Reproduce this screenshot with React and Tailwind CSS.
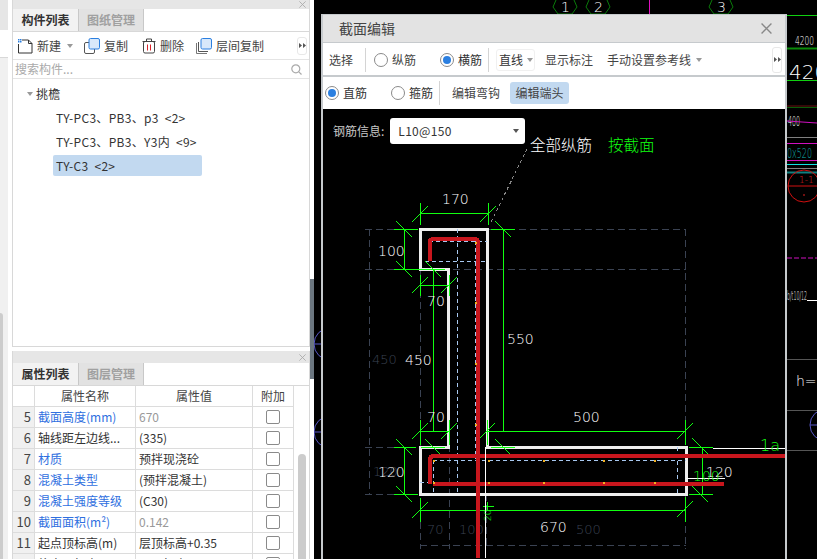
import React from 'react';

const FONT = '"Noto Sans CJK SC", "Noto Sans", sans-serif';
const CAD = '"DejaVu Sans", "Noto Sans CJK SC", sans-serif';

const rows = [
  { no: 5, name: '截面高度(mm)', value: '670', blue: true, gray: true },
  { no: 6, name: '轴线距左边线...', value: '(335)' },
  { no: 7, name: '材质', value: '预拌现浇砼', blue: true },
  { no: 8, name: '混凝土类型', value: '(预拌混凝土)', blue: true },
  { no: 9, name: '混凝土强度等级', value: '(C30)', blue: true },
  { no: 10, name: '截面面积(m²)', value: '0.142', blue: true, gray: true },
  { no: 11, name: '起点顶标高(m)', value: '层顶标高+0.35' },
  { no: 12, name: '终点顶标高(m)', value: '层顶标高' },
];

const Close = ({ size = 8, color = '#a8a8a8' }) => (
  <svg width={size} height={size} viewBox="0 0 10 10" stroke={color} strokeWidth="1.2">
    <path d="M0.5 0.5L9.5 9.5M9.5 0.5L0.5 9.5" />
  </svg>
);

const Caret = ({ color = '#999' }) => (
  <svg width="6" height="4" viewBox="0 0 6 4"><path d="M0 0H6L3 4Z" fill={color} /></svg>
);

const More = () => (
  <div className="flex h-full w-[10px] items-center justify-center rounded-[3px] border border-[#e8e8e8] bg-white">
    <svg width="7" height="5" viewBox="0 0 7 5" fill="#555"><path d="M0 0L3 2.5L0 5ZM4 0L7 2.5L4 5Z" /></svg>
  </div>
);

const Radio = ({ on }) => (
  <span className="flex h-[14px] w-[14px] items-center justify-center rounded-full border border-[#8a8a8a] bg-white">
    {on && <span className="h-[8px] w-[8px] rounded-full bg-[#2b7fe0]" />}
  </span>
);

const Sep = ({ className }) => <span className={`w-px bg-[#d4d4d4] ${className}`} />;

const NewIcon = () => (
  <svg width="16" height="16" viewBox="0 0 16 16" fill="none">
    <path d="M5 2H11.5L15 5.5V15H1.5V6" stroke="#333" />
    <path d="M11.5 2V5.5H15" stroke="#333" />
    <path d="M1 1h1.5v1.5H1zM3 3h1.5v1.5H3zM3 1h1.5v1.5H3zM1 3h1.5v1.5H1z" fill="#2b7fe0" />
  </svg>
);

const CopyIcon = () => (
  <svg width="16" height="16" viewBox="0 0 16 16" fill="none">
    <rect x="0.5" y="4.5" width="10" height="11" rx="1.5" stroke="#555" />
    <rect x="5" y="0.5" width="10.5" height="10.5" rx="1.5" fill="#d8e8fa" stroke="#2b7fe0" />
  </svg>
);

const TrashIcon = () => (
  <svg width="14" height="16" viewBox="0 0 14 16" fill="none" stroke="#444">
    <path d="M0.5 3.5H13.5M4.5 3.5V1H9.5V3.5" />
    <rect x="1.5" y="3.5" width="11" height="11.5" rx="1.5" />
    <path d="M5.5 6.5V12.5M8.5 6.5V12.5" stroke="#d8232a" />
  </svg>
);

const LayerCopyIcon = () => (
  <svg width="16" height="16" viewBox="0 0 16 16" fill="none">
    <path d="M0.5 5V15.5H11" stroke="#777" />
    <path d="M2.5 4V13.5H12" stroke="#555" />
    <rect x="5" y="0.5" width="10.5" height="10.5" rx="1.5" fill="#d8e8fa" stroke="#2b7fe0" />
  </svg>
);

const SearchIcon = () => (
  <svg width="11" height="11" viewBox="0 0 11 11" fill="none" stroke="#aaa" strokeWidth="1.2">
    <circle cx="4.8" cy="4.8" r="4" />
    <path d="M7.8 7.8L10.5 10.5" />
  </svg>
);

const Tab = ({ active, children }) => (
  <div className={`flex h-[22px] items-center justify-center border-r border-[#c8c8c8] font-bold ${active ? 'w-[66px] bg-[#f2f2f2] text-[#333]' : 'w-[65px] bg-[#e2e2e2] text-[#a0a0a0]'}`}>
    {children}
  </div>
);

const Tabs = ({ first, second }) => (
  <div className="flex border-b border-[#d8d8d8]">
    <Tab active>{first}</Tab>
    <Tab>{second}</Tab>
  </div>
);

const PropertyTable = () => (
  <div className="w-[281px] shrink-0 overflow-hidden">
    <div className="grid h-[21px] grid-cols-[22px_101px_117px_41px] text-center text-[#444]">
      <div className="border-r border-b border-[#dcdcdc]" />
      <div className="border-r border-b border-[#dcdcdc] leading-[20px]">属性名称</div>
      <div className="border-r border-b border-[#dcdcdc] leading-[20px]">属性值</div>
      <div className="border-r border-b border-[#dcdcdc] leading-[20px]">附加</div>
    </div>
    {rows.map((r) => (
      <div key={r.no} className="grid h-[21px] grid-cols-[22px_101px_117px_41px]">
        <div className="border-r border-b border-[#dcdcdc] bg-[#f0f0f0] pr-[3px] text-right text-[13px] leading-[20px] text-[#444]">{r.no}</div>
        <div className={`truncate border-r border-b border-[#dcdcdc] pl-[3px] leading-[20px] ${r.blue ? 'text-[#2f6fe0]' : 'text-[#333]'}`}>{r.name}</div>
        <div className={`border-r border-b border-[#dcdcdc] pl-[3px] leading-[20px] ${r.gray ? 'text-[#999]' : 'text-[#333]'}`}>{r.value}</div>
        <div className="flex items-center justify-center border-r border-b border-[#dcdcdc]">
          <span className="h-[14px] w-[14px] rounded-[2px] border border-[#8a8a8a] bg-white" />
        </div>
      </div>
    ))}
  </div>
);

const LeftPanels = () => (
  <div className="flex h-full w-[314px] shrink-0 bg-white text-[12px]">
    <div className="flex w-[12px] shrink-0">
      <div className="flex w-[8px] flex-col">
        <div className="h-[30px] bg-[#e6e6e6]" />
        <div className="h-[28px] border-b border-[#d8d8d8] bg-white" />
        <div className="flex flex-1 bg-[#f0f0f0] pt-[255px]">
          <div className="w-[3px] rounded-tr-[3px] bg-[#cccccc]" />
          <div className="flex-1 bg-[#f0f0f0]" />
        </div>
      </div>
    </div>

    <div className="flex w-[298px] flex-col">
      <div className="flex h-[347px] flex-col border-x border-b border-[#d8d8d8]">
        <div className="flex h-[9px] items-center justify-end overflow-hidden bg-[#e6e6e6] pr-[3px]"><Close size={7} /></div>
        <Tabs first="构件列表" second="图纸管理" />
        <div className="flex h-[28px] items-center border-b border-[#e4e4e4] pl-[4px] text-[#444]">
          <NewIcon />
          <span className="ml-[4px]">新建</span>
          <span className="ml-[6px]"><Caret /></span>
          <span className="ml-[11px]"><CopyIcon /></span>
          <span className="ml-[4px]">复制</span>
          <span className="ml-[14px]"><TrashIcon /></span>
          <span className="ml-[4px]">删除</span>
          <span className="ml-[12px]"><LayerCopyIcon /></span>
          <span className="ml-[4px]">层间复制</span>
          <span className="ml-[33px] h-[18px]"><More /></span>
        </div>
        <div className="flex h-[19px] items-center justify-between border-b border-[#e4e4e4] pl-[2px] pr-[7px] text-[#aaa]">
          <span>搜索构件...</span>
          <SearchIcon />
        </div>
        <div className="flex-1 whitespace-pre pt-[4px] tracking-[0.3px] text-[#333]">
          <div className="flex h-[22px] items-center pl-[14px]">
            <Caret />
            <span className="ml-[3px]">挑檐</span>
          </div>
          <div className="mt-[2px] h-[24px] pl-[43px] leading-[22px]">TY-PC3、PB3、p3  &lt;2&gt;</div>
          <div className="h-[24px] pl-[43px] leading-[22px]">TY-PC3、PB3、Y3内  &lt;9&gt;</div>
          <div className="ml-[40px] h-[21px] w-[149px] rounded-[2px] bg-[#c2d9f0] pl-[3px] leading-[21px]">TY-C3  &lt;2&gt;</div>
        </div>
      </div>

      <div className="h-[4px] bg-white" />

      <div className="flex flex-1 flex-col overflow-hidden border-l border-r border-[#d8d8d8]">
        <div className="flex h-[12px] shrink-0 items-center justify-end bg-[#e6e6e6] pr-[3px]"><Close size={7} /></div>
        <Tabs first="属性列表" second="图层管理" />
        <div className="flex flex-1">
          <PropertyTable />
          <div className="pl-[4px] pt-[68px]">
            <div className="h-[110px] w-[8px] rounded-t-[4px] bg-[#cccccc]" />
          </div>
        </div>
      </div>
    </div>

    <div className="w-[4px] pt-[279px]">
      <div className="h-[100px] bg-[#6b7680]" />
    </div>
  </div>
);

const T = ({ x, y, fill = '#fff', size = 15, children, ...rest }) => (
  <text x={x} y={y} fill={fill} fontSize={size} fontFamily={CAD} fontWeight="200" {...rest}>{children}</text>
);

// canvas behind the dialog, page coordinates
const Backdrop = () => (
  <svg className="absolute inset-0" width="503" height="559" viewBox="314 0 503 559" fill="none">
    <g stroke="#0a7a0a">
      <path d="M556 0L553 7L558 14H572L577 7L574 0" />
      <path d="M589 0L586 7L591 14H605L610 7L607 0" />
      <path d="M712 0L709 7L714 14H728L733 7L730 0" />
    </g>
    <T x="561" y="12" size={14}>1</T>
    <T x="594" y="12" size={14}>2</T>
    <T x="717" y="12" size={14}>3</T>
    <path d="M649.5 0V14" stroke="#e010c0" />
    <g stroke="#5858c8">
      <circle cx="330" cy="344" r="16" />
      <circle cx="330" cy="432" r="16" />
      <path d="M314 344H322M314 432H322" />
      <circle cx="826" cy="425" r="16" />
      <path d="M810 425H817" />
    </g>
    <path d="M787 15.5H817" stroke="#10d010" />
    <T x="795" y="45" size={13} textLength="19" lengthAdjust="spacingAndGlyphs">4200</T>
    <path d="M787 48.5H817" stroke="#0a8a0a" strokeWidth="2" />
    <T x="789" y="79" size={20}>420</T>
    <path d="M787 80.5H817" stroke="#10d010" />
    <path d="M787 106H817" stroke="#6a1010" />
    <path d="M787 107.5H817" stroke="#0a5a0a" />
    <T x="788" y="126" size={14} textLength="12" lengthAdjust="spacingAndGlyphs">400</T>
    <path d="M787 121L817 123" stroke="#d010c0" />
    <path d="M787 137.5H817" stroke="#808080" />
    <path d="M787 143.5H817" stroke="#d010c0" />
    <T x="787" y="158" size={14} fill="#10b0b0" textLength="25" lengthAdjust="spacingAndGlyphs">0x520</T>
    <path d="M787 160.5H817" stroke="#d010c0" />
    <path d="M787 164.5H817" stroke="#10e0e0" />
    <path d="M787 168.5H817" stroke="#808080" />
    <path d="M787 172.5H817" stroke="#108080" strokeWidth="2" />
    <circle cx="804" cy="186" r="16" stroke="#d01010" />
    <path d="M788 186H817" stroke="#d01010" />
    <T x="799" y="183" size={9} fill="#e02020">1-1</T>
    <path d="M803 195h2" stroke="#e02020" />
    <path d="M787 258H817" stroke="#d010c0" strokeDasharray="5 2" />
    <T x="787" y="300" size={13} textLength="20" lengthAdjust="spacingAndGlyphs">b/t10/12</T>
    <path d="M807 300.5H817" stroke="#fff" />
    <path d="M787 359.5H817M787 410.5H817M787 450.5H817" stroke="#555" />
    <T x="796" y="386" size={14}>h=13</T>
  </svg>
);

const tick = (x, y, dx = 8, dy = -8) => `M${x - dx} ${y - dy}L${x + dx} ${y + dy}`;

const Section = () => (
  <svg className="absolute inset-0" width="462" height="449" viewBox="323 110 462 449" fill="none" shapeRendering="crispEdges">
    {/* dark reference grid */}
    <g stroke="#3a4252" strokeDasharray="7 4">
      <path d="M365 230.5H686M365 270.5H686M369.5 230V495M365 448.5H420M365 495.5H420" />
      <path d="M420.5 270V550M449.5 270V550M486.5 495V550M685.5 230V550M420 546.5H686" />
    </g>
    <g fontFamily={CAD} fontWeight="200" fontSize="13" fill="#3a4252">
      <text x="372" y="365">450</text>
      <text x="373" y="477">120</text>
      <text x="427" y="535">70</text>
      <text x="459" y="535">100</text>
      <text x="576" y="535">500</text>
    </g>

    {/* concrete outline */}
    <path d="M420.5 230.5H487.5V448.5H686.5V495.5H420.5V448.5H448.5V270.5H420.5Z" stroke="#eeeeee" strokeWidth="3" />

    {/* stirrup centre lines */}
    <g stroke="#a8c8f0" strokeDasharray="4 3">
      <path d="M429 242.5H487M425 262.5H487M457.5 230V495M475.5 242V460" />
      <path d="M433 461.5H686M433.5 461V495M677.5 448V495M420 483.5H433" />
    </g>

    {/* green dimensions */}
    <g stroke="#10ff10">
      <path d="M420 214.5H488M420.5 204V226M488.5 204V226" />
      <path d={`${tick(420, 215)}${tick(488, 215)}`} />
      <path d="M404.5 230V270M394 230.5H418M394 270.5H445M491 230.5H515M503.5 230V432" />
      <path d={`${tick(404, 230, 8, 8)}${tick(404, 270, 8, 8)}${tick(503, 230, 8, 8)}${tick(433, 270, 8, 8)}`} />
      <path d="M420 286.5H449M420.5 276V297M449.5 276V297M433.5 270V432" />
      <path d={`${tick(420, 286)}${tick(449, 286)}`} />
      <path d="M420 432.5H449M420.5 421V446M449.5 421V446M487 432.5H685M487.5 421V446M685.5 421V446" />
      <path d={`${tick(420, 432)}${tick(449, 432)}${tick(487, 432)}${tick(685, 432)}`} />
      <path d="M394 448.5H416M421 448.5H445M491 448.5H515M394 495.5H418M404.5 448V495" />
      <path d={`${tick(404, 448, 8, 8)}${tick(404, 495, 8, 8)}${tick(503, 448, 8, 8)}${tick(433, 448, 8, 8)}`} />
      <path d="M420 511.5H685M420.5 499V523M685.5 498V523" />
      <path d={`${tick(420, 511)}${tick(685, 510)}`} />
      <path d="M702.5 448V495M689 448.5H713M689 495.5H713" />
      <path d={`${tick(700, 447, 8, 8)}${tick(700, 495, 8, 8)}`} />
      <path d="M483 507.5H494M487.5 503V512" />
    </g>

    {/* rebar */}
    <g stroke="#c8161d" strokeWidth="4">
      <path d="M430 262V243Q430 240 433 240H475Q478 240 478 243V559" />
      <path d="M785 457H434Q430 457 430 461V485" />
      <path d="M433 485H724" />
    </g>

    <g fill="#f0b020">
      {[[475, 243], [475, 303], [475, 364], [475, 425], [433, 461], [488, 461], [543, 461], [603, 461], [433, 483], [488, 483], [543, 483], [603, 483], [654, 461], [654, 483]].map(([x, y]) => (
        <rect key={`${x}-${y}`} x={x} y={y} width="1.5" height="2" />
      ))}
    </g>

    <path d="M485.5 448V559M713 449.5H785M686 479.5H725" stroke="#fff" />
    <path d="M527 150L490 225" stroke="#888" strokeDasharray="3 3" />

    <g fontFamily={CAD} fontWeight="200" fontSize="14" fill="#fff">
      <text x="442" y="205">170</text>
      <text x="378" y="257">100</text>
      <text x="427" y="307">70</text>
      <text x="405" y="366">450</text>
      <text x="507" y="345">550</text>
      <text x="427" y="423">70</text>
      <text x="573" y="423">500</text>
      <text x="378" y="478">120</text>
      <text x="540" y="533">670</text>
      <text x="706" y="478">120</text>
    </g>
    <g fontFamily={CAD} fontWeight="200" fill="#10ff10">
      <text x="693" y="482" fontSize="14">100</text>
      <text x="760" y="452" fontSize="16">1a</text>
      <text x="0" y="0" fontSize="9" transform="translate(491 522) rotate(-90)">20</text>
    </g>
    <g fontFamily={FONT} fontWeight="300" fontSize="15.5">
      <text x="530" y="152" fill="#fff">全部纵筋</text>
      <text x="608" y="152" fill="#10ff10">按截面</text>
    </g>
  </svg>
);

const SectionDialog = () => (
  <div className="relative ml-[7px] flex h-[545px] w-[466px] flex-col border-x-2 border-t border-[#c6cacd] bg-[#c6cacd] text-[12px]" style={{ fontFamily: FONT }}>
    <div className="flex h-[27px] items-center justify-between bg-[#e3e3e3] pl-[16px] pr-[13px] text-[14px] text-[#444]">
      <span>截面编辑</span>
      <Close size={11} color="#888" />
    </div>
    <div className="mt-[1px] flex h-[32px] items-center bg-white pl-[6px] pr-[3px] pt-[1px] text-[#444]">
      <span>选择</span>
      <Sep className="ml-[12px] h-[24px]" />
      <span className="ml-[8px]"><Radio /></span>
      <span className="ml-[4px]">纵筋</span>
      <span className="ml-[24px]"><Radio on /></span>
      <span className="ml-[4px] text-[#333]">横筋</span>
      <Sep className="ml-[6px] h-[24px]" />
      <span className="ml-[7px] flex h-[22px] w-[39px] items-center rounded-[3px] border border-[#f0f0f0] pl-[2px] text-[#333]">
        直线<span className="ml-[4px]"><Caret /></span>
      </span>
      <span className="ml-[10px]">显示标注</span>
      <span className="ml-[14px]">手动设置参考线</span>
      <span className="ml-[5px]"><Caret /></span>
      <span className="ml-auto h-[26px]"><More /></span>
    </div>
    <div className="mt-[2px] flex h-[32px] items-center bg-white pb-[1px] pl-[2px] text-[#333]">
      <Radio on />
      <span className="ml-[4px]">直筋</span>
      <span className="ml-[24px]"><Radio /></span>
      <span className="ml-[4px]">箍筋</span>
      <Sep className="ml-[6px] h-[24px]" />
      <span className="ml-[12px] text-[#444]">编辑弯钩</span>
      <span className="ml-[10px] flex h-[22px] w-[59px] items-center justify-center rounded-[3px] bg-[#c2d9f0] text-[#444]">编辑端头</span>
    </div>
    <div className="relative flex-1 overflow-hidden bg-black">
      <Section />
      <div className="relative flex items-center pl-[10px] pt-[9px]">
        <span className="text-[#c8c8c8]">钢筋信息:</span>
        <div className="ml-[6px] flex h-[26px] w-[135px] items-center justify-between rounded-[3px] bg-white pl-[8px] pr-[6px] tracking-[0.3px] text-[#333]">
          <span>L10@150</span>
          <Caret color="#555" />
        </div>
      </div>
    </div>
  </div>
);

export default function App() {
  return (
    <div className="flex h-[559px] w-[817px] overflow-hidden bg-black" style={{ fontFamily: FONT }}>
      <LeftPanels />
      <div className="relative flex-1 pt-[14px]">
        <Backdrop />
        <SectionDialog />
      </div>
    </div>
  );
}
